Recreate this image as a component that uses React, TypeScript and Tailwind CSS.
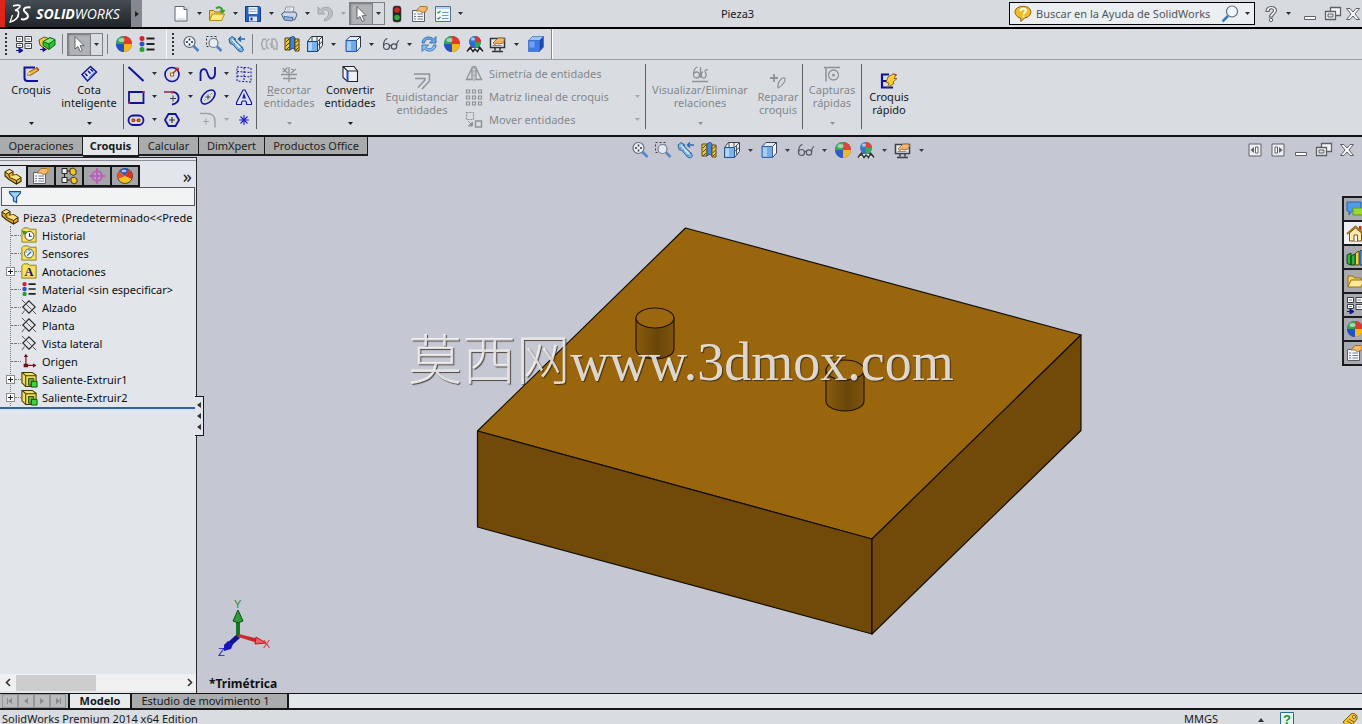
import React, { type ReactNode } from "react";

const NAVY = "#12129a";
const GREY = "#8f9397";

type IconProps = { size?: number };

function Svg({ children, size = 18 }: { children: ReactNode; size?: number }) {
  return (
    <svg width={size} height={size} viewBox="0 0 18 18" fill="none" aria-hidden="true" className="shrink-0">
      {children}
    </svg>
  );
}

/* ---------- file and view icons ---------- */

const NewDoc = () => (
  <Svg>
    <path d="M3 1.5h9l3 3V16H3z" fill="#fbfcfe" stroke="#5c6874" />
    <path d="M12 1.5v3h3" fill="#d5dde5" stroke="#5c6874" />
    <path d="M5 14h8" stroke="#c3ccd6" />
  </Svg>
);
const OpenDoc = () => (
  <Svg>
    <path d="M1.5 15.5v-10h4l1.5 1.5h6v3" fill="#f5d25c" stroke="#9a7411" />
    <path d="M1.5 15.5l3-6.5h12l-3 6.5z" fill="#ffe98c" stroke="#b78a17" />
    <path d="M8 3.5c2-2 5-2 6.500 1.500" stroke="#35a02c" strokeWidth="2" />
    <path d="M11.500 5h6l-3 4z" fill="#35a02c" />
  </Svg>
);
const Save = () => (
  <Svg>
    <path d="M1.500 1.500h14l1 1v14h-15z" fill="#2563c4" stroke="#153a86" />
    <path d="M4.500 2h9v7h-9z" fill="#f1f5fb" />
    <path d="M5.500 4h7M5.500 6.500h7" stroke="#93a8c6" />
    <path d="M5 11.500h8v5H5z" fill="#dce6f4" />
    <path d="M6.500 12.500h2v3h-2z" fill="#153a86" />
  </Svg>
);
const Printer = () => (
  <Svg>
    <path d="M4 8l2-6h8l-1.500 6z" fill="#fff" stroke="#8793a1" />
    <path d="M1.500 9l3-2h11l1.500 3-2.500 5-11-1.500z" fill="#cbd7e6" stroke="#4e5c6c" />
    <path d="M4 11.500l9 1-1 3.500-8-1z" fill="#8fb4e2" stroke="#4e6c94" />
    <path d="M6.500 4h5M6 6h5" stroke="#9fb0c4" />
  </Svg>
);
const Undo = () => (
  <Svg>
    <path d="M2 2v7h7L6.500 6.500C9 3.500 13 5 12.500 9c-.3 2.500-2 4-4 5v2c5-1 8-4 8-8C16.500 2 9 .5 4.500 4.500z" fill="#bcbfc3" stroke="#999da2" strokeWidth=".8" />
  </Svg>
);
const Cursor = () => (
  <Svg>
    <path d="M5 1.500v12.500l3-2.500 2.200 5 2.200-1-2.300-4.800h4z" fill="#fff" stroke="#55585c" strokeWidth=".9" />
  </Svg>
);
const Traffic = () => (
  <Svg>
    <rect x="5" y="1" width="8" height="16" rx="2.500" fill="#202322" stroke="#4a4a4a" strokeWidth=".6" />
    <circle cx="9" cy="5" r="2.800" fill="#d02a22" />
    <circle cx="9" cy="12.500" r="2.800" fill="#2fae3a" />
  </Svg>
);
const Props = ({ size }: IconProps) => (
  <Svg size={size}>
    <path d="M1.500 5.500h12v11h-12z" fill="#f4f6f8" stroke="#5b6067" />
    <path d="M3 9h2M3 11.500h2M3 14h2M6.500 9h5.500M6.500 11.500h5.500M6.500 14h5.500" stroke="#6d7d95" />
    <path d="M5 6l4-4.500h6l1.500 1.500-1.500 3.500-4 1-2-1.500z" fill="#f0bc72" stroke="#94601c" strokeWidth=".8" />
    <path d="M14.500 1l2.500.500v3l-2 1z" fill="#e4902b" />
  </Svg>
);
const ListOpt = () => (
  <Svg>
    <path d="M1.500 1.500h15v15h-15z" fill="#f3f8fb" stroke="#56718c" />
    <path d="M2 2h14v2H2z" fill="#b6d6ee" />
    <path d="M3.500 7l1 1 2-2M3.500 13l1 1 2-2" stroke="#2c9b3e" strokeWidth="1.200" />
    <path d="M8 7.500h6.500M8 10.500h6.500M8 13.500h6.500" stroke="#6a9cc9" />
  </Svg>
);
const Feature = () => (
  <Svg>
    <path d="M1.500 1.500h6v5h-6zM1.500 8.500h6v4h-6zM10 1.500h6.500v5H10zM10 8.500h6.500v5H10z" fill="#fff" stroke="#3a3d42" />
    <path d="M3 4h3M11.500 4H15M11.500 11H15M3 10.500h3" stroke="#777" />
    <path d="M1 15.500h4M4 13l4 2.500L4 18z" stroke={NAVY} fill={NAVY} />
  </Svg>
);
const Block = () => (
  <Svg>
    <path d="M1 5l5-3 6 2v7l-4 4-6-5z" fill="#f2cf45" stroke="#6b5410" />
    <path d="M5 6.500l7-4 5 2v5.500l-6 4.500-6-4z" fill="#2fc135" stroke="#15651a" />
    <path d="M5 6.500l6 2.500 6-4.500M11 9v5.500" stroke="#15651a" />
    <path d="M6 6.500l6-3 4 1.200-5 3.300z" fill="#83ea7b" />
    <path d="M2 14.500h4M5 12.500l3 2-3 2z" stroke={NAVY} fill={NAVY} />
  </Svg>
);
const Ball = ({ size }: IconProps) => (
  <Svg size={size}>
    <circle cx="9" cy="9" r="8" fill="#3566cf" />
    <path d="M9 9L1 9A8 8 0 0 0 9 17z" fill="#2550c4" />
    <path d="M9 9h8A8 8 0 0 1 9 17z" fill="#f0b81c" />
    <path d="M9 9V1A8 8 0 0 1 17 9z" fill="#e23a2a" />
    <path d="M9 9L1 9A8 8 0 0 1 9 1z" fill="#2fa650" />
    <ellipse cx="6.500" cy="5" rx="3" ry="2" fill="#fff" fillOpacity=".55" />
  </Svg>
);
const Material = ({ size }: IconProps) => (
  <Svg size={size}>
    <circle cx="4" cy="3.500" r="2.500" fill="#d3242c" />
    <circle cx="4" cy="9" r="2.500" fill="#2d54c6" />
    <circle cx="4" cy="14.500" r="2.500" fill="#24a12f" />
    <path d="M8.500 3.500h8M8.500 9h8M8.500 14.500h8" stroke="#222" strokeWidth="1.800" />
  </Svg>
);
const ZoomFit = () => (
  <Svg>
    <circle cx="7.500" cy="7" r="5.500" fill="#eef4fa" stroke="#59636f" strokeWidth="1.200" />
    <path d="M7.500 3.500v2M7.500 8.500v2M4 7h2M9 7h2" stroke="#222" strokeWidth="1.500" />
    <path d="M11.500 11l5 5" stroke="#4d7fc4" strokeWidth="2.500" />
  </Svg>
);
const ZoomArea = () => (
  <Svg>
    <path d="M1.500 1.500h10v10h-10z" stroke="#333" strokeDasharray="2 2" />
    <circle cx="8.500" cy="8" r="4.500" fill="#e6eef6" stroke="#6d7782" strokeWidth="1.200" />
    <path d="M12 11.500l4.500 4.500" stroke="#4d7fc4" strokeWidth="2.500" />
  </Svg>
);
const PrevView = () => (
  <Svg>
    <path d="M1 4l3-2.500 3 2 1 3 6 5.500 1.500 3-2 2-3-1-5.500-6.500-3-1z" fill="#7fb8e6" stroke="#1d5a96" />
    <path d="M3.500 7l4-3.500M6 9.500L9 6.500M10.500 15l3.500-3.500" stroke="#1d5a96" />
    <path d="M4 4.500l8.500 9" stroke="#e2f2ff" strokeWidth="1.500" />
    <path d="M10.500 4H17M13 1.500L10.500 4 13 6.500" stroke="#1a62b8" strokeWidth="1.500" />
  </Svg>
);
const Ghost = () => (
  <Svg>
    <path d="M6 4L3 4.500 1.500 9 3 14h3M9.500 4L6.500 6v6L9 14M9.500 9h2v4M12 4h3l2 4v6h-3l-2-4z" stroke="#a5a9ad" strokeWidth="1.500" />
    <path d="M5 8h2M12 9l3 3" stroke="#bfc2c5" strokeWidth="1.500" />
  </Svg>
);
const Section = () => (
  <Svg>
    <path d="M2 3h5v12H2z" fill="#f0c82c" stroke="#4c3c08" />
    <path d="M7 3c3-2 4-2 5 0v12c-1-2-3-2-5 0z" fill="#3e82d6" stroke="#17427c" />
    <path d="M12 4h4v12h-4z" fill="#f0c82c" stroke="#4c3c08" />
    <path d="M3 7l3-3M3 11l3-3M3 15l3-3M12.500 8l3-3M12.500 12l3-3M12.500 15.500l3-3" stroke="#4c3c08" />
  </Svg>
);
const Orient = () => (
  <Svg>
    <path d="M1.500 6.500l4-5h11v9l-5 6h-10z" fill="#e9f1f8" stroke="#333" />
    <path d="M11.500 6.500l5-5M6 1.500v5M11 1.500v5M13.500 4.500v9M11.500 10.500l5-4" stroke="#333" strokeWidth=".9" />
    <path d="M1.500 6.500h10v10h-10z" fill="#76b2ee" stroke="#1a4980" />
    <path d="M2.500 7.500h3.500v8H2.500z" fill="#b4d7f8" />
  </Svg>
);
const Cube = () => (
  <Svg>
    <path d="M2 5.500l4-4h10.500l-4 4z" fill="#e2effb" stroke="#2d3748" />
    <path d="M12.500 5.500l4-4V12l-4 4.500z" fill="#fff" stroke="#2d3748" />
    <path d="M2 5.500h10.500v11H2z" fill="#6fa9e9" stroke="#2b58a0" />
    <path d="M3 6.500h4v9H3z" fill="#a5cdf6" />
  </Svg>
);
const SolidCube = () => (
  <Svg>
    <path d="M1.500 5.500l4-4h11l-4 4z" fill="#9cc3fa" stroke="#3a67c0" strokeWidth=".7" />
    <path d="M12.500 5.500l4-4V12l-4 4.500z" fill="#1f48ae" stroke="#3a67c0" strokeWidth=".7" />
    <path d="M1.500 5.500h11v11h-11z" fill="#3f7be8" stroke="#3a67c0" strokeWidth=".7" />
    <path d="M2.500 6.500h5v6h-5z" fill="#6ea2f5" />
  </Svg>
);
const Glasses = () => (
  <Svg>
    <circle cx="4.500" cy="11.500" r="3" stroke="#4a5058" strokeWidth="1.200" />
    <circle cx="12" cy="11.500" r="2.700" stroke="#4a5058" strokeWidth="1.200" />
    <path d="M7.500 11c.5-1 1.500-1 2 0M1.500 11c0-4 1-7 4-7.500M14.700 11c0-3 .5-5 2.500-5.500" stroke="#4a5058" strokeWidth="1.200" />
  </Svg>
);
const Rebuild = () => (
  <Svg>
    <path d="M2 8c0-6 8-8 11.500-4L16 1.500V8H9.500L12 5.500C9 3 5 4.500 4.500 8z" fill="#6ba6e4" stroke="#2464ad" strokeWidth=".8" />
    <path d="M16 10c0 6-8 8-11.500 4L2 16.500V10h6.500L6 12.500c3 2.500 7 1 7.500-2.500z" fill="#8fbfee" stroke="#2464ad" strokeWidth=".8" />
  </Svg>
);
const Scene = () => (
  <Svg>
    <path d="M1 16.500l3.500-4.500h9l3.500 4.500" fill="#eee" stroke="#222" strokeWidth="1.300" />
    <path d="M2 15l2.500-2 2.500 3.500L9 14l2.500 2.500 2-3.500 2.500 2" stroke="#222" strokeWidth="1.500" />
    <circle cx="9" cy="7" r="6" fill="#3566cf" />
    <path d="M9 7V1A6 6 0 0 0 3 7z" fill="#2f7fd0" />
    <path d="M9 7V1a6 6 0 0 1 6 6z" fill="#e0362a" />
    <path d="M9 7h6a6 6 0 0 1-6 6z" fill="#2fa650" />
    <ellipse cx="7" cy="4" rx="2" ry="1.500" fill="#fff" fillOpacity=".6" />
  </Svg>
);
const Screen = () => (
  <Svg>
    <path d="M1.500 3.500h14v9h-14z" fill="#eef1f4" stroke="#2f3338" strokeWidth="1.500" />
    <path d="M6 13v2.500M11 13v2.500M3 16.500h11" stroke="#2f3338" strokeWidth="1.500" />
    <path d="M4 8l5-5h5l2 1-2 4-4 1-2-1-2 1.500z" fill="#f0b56a" stroke="#8a5718" strokeWidth=".8" />
    <path d="M3.500 10.500h9" stroke="#888" />
  </Svg>
);

/* ---------- sketch icons ---------- */

const Sketch = () => (
  <Svg>
    <path d="M13 2.500H2.500v10.500c0 2.500 1 3 3 3H16" stroke={NAVY} strokeWidth="2" />
    <path d="M5 10l2-3 8-4.500 2 2.500-8 5z" fill="#f4b53a" stroke="#7a4f10" strokeWidth=".9" />
    <path d="M5 10l2-3 1.500 2z" fill="#fff0c8" />
    <path d="M14 3l1.200-.7L17 5l-1.200.6z" fill="#b83a2a" />
  </Svg>
);
const Dimension = () => (
  <Svg>
    <path d="M2 9.500l8.500-8 6 5.500-9 9z" fill="#dce4fa" stroke={NAVY} strokeWidth="1.500" />
    <path d="M5 8.500L7.500 11M8 6l2.500 2.500M10.500 4L13 6.500" stroke={NAVY} strokeWidth="1.500" />
    <path d="M8.500 13l6-6" stroke="#4a6fd6" />
  </Svg>
);
const Line = () => (
  <Svg>
    <path d="M1.500 2l15 14" stroke={NAVY} strokeWidth="2" />
  </Svg>
);
const CircleI = () => (
  <Svg>
    <circle cx="9" cy="9.500" r="7" stroke={NAVY} strokeWidth="1.600" />
    <path d="M9 9.500l5-5.500" stroke="#b42020" strokeWidth="1.200" />
    <path d="M7.500 8h3v3h-3z" fill="#fff" stroke="#a05a18" />
    <path d="M13 3h2.500v2.500" stroke="#c22" />
  </Svg>
);
const Spline = () => (
  <Svg>
    <path d="M1.500 16V8C2 3 7 3 8 7l1.500 4c2 4 6 3 6.500-2V2" stroke={NAVY} strokeWidth="1.800" />
  </Svg>
);
const Region = () => (
  <Svg>
    <path d="M2 2l14 1v14L2 16zM2 6.500l14 1M2 11l14 1M9 2.500v14" stroke={NAVY} strokeDasharray="2 1.500" />
  </Svg>
);
const RectI = () => (
  <Svg>
    <path d="M2 4h14.500v11H2z" stroke={NAVY} strokeWidth="1.800" />
    <path d="M1 14h2v2H1zM15.500 3h2v2h-2z" fill="#c92a2a" />
  </Svg>
);
const ArcI = () => (
  <Svg>
    <path d="M1 4h8" stroke="#7a1e3e" strokeWidth="1.400" />
    <path d="M8 4c10-1 10 12 1 12.500" stroke={NAVY} strokeWidth="1.800" />
    <path d="M10 7.500v6M7 10.500h6" stroke="#444" />
    <path d="M8 3h2.500v2.500H8z" fill="#c92a2a" />
  </Svg>
);
const EllipseI = () => (
  <Svg>
    <ellipse cx="9" cy="9" rx="8.500" ry="5" transform="rotate(-45 9 9)" stroke={NAVY} strokeWidth="1.600" />
    <path d="M9 6.500v5M6.500 9h5M5.500 12.500l1-1M11.500 6.500l1-1" stroke="#444" />
  </Svg>
);
const TextI = () => (
  <Svg>
    <path d="M1.500 16.500v-2L8 2h2l6.500 12.500v2h-5v-2l-1-1.500h-3l-1 1.500v2zM8 10h2.200L9 6.500z" fill="#dbe1fa" stroke={NAVY} strokeWidth="1.100" />
  </Svg>
);
const Slot = () => (
  <Svg>
    <rect x="1.500" y="4.500" width="15" height="9.500" rx="4.700" stroke={NAVY} strokeWidth="1.800" />
    <path d="M5 8h2.500v2.500H5zM10.500 8H13v2.500h-2.500z" fill="#c97a3b" stroke="#922" strokeWidth=".8" />
    <path d="M7.500 9.200h3" stroke="#922" strokeDasharray="1 1" />
  </Svg>
);
const Hexagon = () => (
  <Svg>
    <path d="M5.500 3h7l3.500 6-3.500 6h-7L2 9z" stroke={NAVY} strokeWidth="1.800" />
    <path d="M9 6v6M6 9h6" stroke="#333" strokeWidth="1.200" />
  </Svg>
);
const Fillet = () => (
  <Svg>
    <path d="M1 2.500h7c6 0 8 3 8 8v6" stroke="#a0a4a8" strokeWidth="1.500" />
    <path d="M7 7.500v6M4 10.500h6" stroke="#a0a4a8" />
  </Svg>
);
const PointI = () => (
  <Svg>
    <path d="M9 4v10M4 9h10M5.500 5.500l7 7M12.500 5.500l-7 7" stroke="#2222c8" strokeWidth="1.100" />
  </Svg>
);
const Trim = () => (
  <Svg>
    <path d="M1 9.500h16M9 2v15M3 13.500h13" stroke={GREY} strokeWidth="1.300" />
    <path d="M2.500 3l5 5M7.500 2.500L3 7M11 8l5-4M11 4l4 1.500" stroke={GREY} strokeWidth="1.300" />
  </Svg>
);
const Convert = () => (
  <Svg>
    <path d="M2 1.500h11l3.500 4.500v10.500h-10L2 12.500z" fill="#eef0f3" stroke="#222" strokeWidth="1.100" />
    <path d="M2 1.500L6.500 6h10" stroke="#222" strokeWidth="1.100" />
    <path d="M6.500 6v10.500" stroke="#2343d8" strokeWidth="2" />
  </Svg>
);
const Offset = () => (
  <Svg>
    <path d="M1 2h15.500v7L9 17M2 6.500h10v1.500L5 15.500" stroke={GREY} strokeWidth="1.500" />
  </Svg>
);
const Mirror = () => (
  <Svg>
    <path d="M1.500 14.500L7 3v11.500zM16.500 14.500L11 3v11.500z" stroke={GREY} strokeWidth="1.300" />
    <path d="M9 1v16" stroke={GREY} strokeDasharray="3 1" />
    <path d="M6.500 2h5" stroke={GREY} strokeWidth="1.500" />
  </Svg>
);
const Pattern = () => (
  <Svg>
    <path d="M1.500 2h3v3h-3zM7.500 2h3v3h-3zM13.500 2h3v3h-3zM1.500 8h3v3h-3zM7.500 8h3v3h-3zM13.500 8h3v3h-3zM1.500 14h3v3h-3zM7.500 14h3v3h-3zM13.500 14h3v3h-3z" stroke={GREY} strokeWidth="1.200" />
  </Svg>
);
const Move = () => (
  <Svg>
    <path d="M1.500 1.500h7v7h-7z" stroke={GREY} strokeDasharray="2 1" strokeWidth="1.200" />
    <path d="M10.500 10h6v6h-6z" stroke={GREY} strokeWidth="1.400" />
    <path d="M3 10l4 4M7.500 11v4h-4z" stroke={GREY} fill={GREY} />
  </Svg>
);
const Relations = () => (
  <Svg>
    <circle cx="5.500" cy="10" r="3" stroke={GREY} strokeWidth="1.300" />
    <path d="M2.500 9c0-4 1-6 4-7M9.500 2v11M12 7c-2 0-2.500 5 0 6s4-3 2.500-5.500S15 5 17 4.500M1 16.500h16" stroke={GREY} strokeWidth="1.300" />
  </Svg>
);
const Repair = () => (
  <Svg>
    <path d="M5 2v8M1 6h8" stroke={GREY} strokeWidth="1.800" />
    <path d="M9 16c-1-6 4-11 6.500-10 2 2-2 8-6.500 10z" stroke={GREY} strokeWidth="1.200" />
  </Svg>
);
const Snaps = () => (
  <Svg>
    <path d="M1 2.500h16M3 2v14.500" stroke={GREY} strokeWidth="1.500" />
    <circle cx="10.500" cy="10" r="5" stroke={GREY} strokeWidth="1.300" />
    <circle cx="10.500" cy="10" r="1.500" fill={GREY} />
  </Svg>
);
const Rapid = () => (
  <Svg>
    <path d="M9 2.500H2v13h11M2 9h5" stroke={NAVY} strokeWidth="2.200" />
    <path d="M8 5l5-3 3 1-2 3.500h3L13 10l1 1.500-6.500 4L9 11l-3-.5z" fill="#f8cf2e" stroke="#775508" strokeWidth=".8" />
    <path d="M13 1l4 1.500-1 2z" fill="#c03a28" />
  </Svg>
);

/* ---------- tree icons ---------- */

const PartIcon = () => (
  <Svg>
    <path d="M1 4l4.500-2.500L9 3.500v4l3.500-1 4.500 3v4L12.500 16 5 11.500 1 8z" fill="#e3ad2c" stroke="#3b2c08" strokeWidth="1.100" />
    <path d="M1.500 4L5.500 2l3 1.500L4.500 6z" fill="#ffe88a" />
    <path d="M5.500 9.500L9 7.500l3.500-.5 3.800 2.500-4 2.500z" fill="#ffe07a" />
    <path d="M1 4l3.700 2.200L9 3.500M4.700 6.200l.8 3.300 7 3 4.500-3M12.500 12.500V16" stroke="#3b2c08" />
  </Svg>
);
const Folder = ({ children }: { children: ReactNode }) => (
  <Svg size={16}>
    <path d="M1 3l2-2h5l1.500 1.500H17V17H1z" fill="#f9e156" stroke="#83751a" />
    {children}
  </Svg>
);
const History = () => (
  <Folder>
    <circle cx="9.500" cy="10" r="5" fill="#fff" stroke="#334" />
    <path d="M9.500 7v3.500H12" stroke="#223" strokeWidth="1.200" />
    <path d="M1 4l6 1-4 4z" fill="#239b33" />
  </Folder>
);
const Sensors = () => (
  <Folder>
    <circle cx="9" cy="9.500" r="5" fill="#f3f9ff" stroke="#345" />
    <path d="M7 12l4.500-4.500M6 8h1M9 6v1" stroke="#234fa5" strokeWidth="1.400" />
  </Folder>
);
const Notes = () => (
  <Folder>
    <text x="9" y="14.500" textAnchor="middle" fontFamily="Liberation Serif, serif" fontWeight="700" fontSize="14" fill="#14147a">A</text>
  </Folder>
);
const Plane = () => (
  <Svg size={16}>
    <path d="M9 2l7 7-7 7-7-7z" stroke="#222" strokeWidth="1.200" />
    <path d="M1 1l4 4M13 13l4 4M1 17l3-4M6 6l6 6" stroke="#444" />
  </Svg>
);
const Origin = () => (
  <Svg size={16}>
    <path d="M5.500 2v12H17" stroke="#8c1620" strokeWidth="1.400" />
    <path d="M3 4.500L5.500 1 8 4.500zM13.500 11.500L17 14l-3.500 2.500zM3 12h5v4H3z" fill="#6f101b" />
  </Svg>
);
const Extrude = () => (
  <Svg size={17}>
    <path d="M1 1.500h11l4 3v12H5l-4-4z" fill="#f3de5e" stroke="#3f380c" strokeWidth="1.100" />
    <path d="M5 5h11M5 5v11.500M1 1.500L5 5" stroke="#3f380c" strokeWidth="1.100" />
    <path d="M8 8h5.500v3H11v4H8z" fill="#7cae30" stroke="#1c4e12" />
    <path d="M11 11h6v6h-6z" fill="#38d53b" stroke="#145017" />
  </Svg>
);
const ConfigIcon = () => (
  <Svg>
    <path d="M2 1.500h5v5H2zM2 10.500h5v5H2z" fill="#eee" stroke="#222" />
    <path d="M7 4h3M4.500 6.500v4M7 13h3" stroke="#222" />
    <path d="M10 2l3-1 3 2v4l-3 1.500-3-2zM11 11l3-1 3 2v3.500l-3 1.500-3-2z" fill="#eec733" stroke="#4a3808" />
  </Svg>
);
const TargetIcon = () => (
  <Svg>
    <circle cx="9" cy="9" r="5" stroke="#c254c4" strokeWidth="1.600" />
    <path d="M9 1v16M1 9h16" stroke="#c254c4" strokeWidth="1.600" />
  </Svg>
);
const DisplayBall = () => (
  <Svg>
    <circle cx="9" cy="9" r="7.500" fill="#f0c324" stroke="#2c2a28" strokeWidth=".8" />
    <path d="M9 9L3 4A7.500 7.500 0 0 1 13 2.700z" fill="#2858c8" />
    <path d="M9 9l4-6.300A7.500 7.500 0 0 1 16 12z" fill="#dc3122" />
    <path d="M9 9L3 4a7.500 7.500 0 0 0-1 8z" fill="#e0562a" />
    <ellipse cx="8" cy="4" rx="2.500" ry="1.300" fill="#fff" fillOpacity=".65" />
  </Svg>
);
const Funnel = () => (
  <Svg size={14}>
    <path d="M2 2h14v2l-5 5.500v6.500l-4-2V9.500L2 4z" fill="#9fd0ef" stroke="#1b4f94" strokeWidth="1.500" />
  </Svg>
);

/* ---------- window icons ---------- */

const frame = "#5e6268";
const MinI = () => (
  <Svg>
    <path d="M3.500 11.500h11v3h-11z" fill="#fff" stroke={frame} />
  </Svg>
);
const RestoreI = () => (
  <Svg>
    <path d="M6.500 2.500h10v8h-10z" fill="#f5f6f8" stroke={frame} strokeWidth="1.300" />
    <path d="M1.500 6.500h10v8h-10z" fill="#f5f6f8" stroke={frame} strokeWidth="1.300" />
    <path d="M4 9h5v3H4z" fill="#dfe2e6" stroke={frame} />
  </Svg>
);
const CloseI = () => (
  <Svg>
    <path d="M2.500 3.500h3.500L9 7l3-3.500h3.500L11 9l4.500 5.500H12L9 11l-3 3.500H2.500L7 9z" fill="#f5f6f8" stroke={frame} />
  </Svg>
);
const PaneL = () => (
  <Svg>
    <path d="M3 3h12v12H3z" fill="#eceef3" stroke={frame} />
    <path d="M9.500 6h2.500v6H9.500z" fill="#fff" stroke={frame} />
    <path d="M8 6v6L4.500 9z" fill={frame} />
  </Svg>
);
const PaneR = () => (
  <Svg>
    <path d="M3 3h12v12H3z" fill="#eceef3" stroke={frame} />
    <path d="M6 6h2.500v6H6z" fill="#fff" stroke={frame} />
    <path d="M10 6v6l3.500-3z" fill={frame} />
  </Svg>
);
const HelpI = () => (
  <Svg>
    <path d="M4 6.500C4 0 14.500 0 14.500 5.500c0 3-3.500 3.500-4 6.500H7.500c0-4 4-4 4-6.500C11.500 3 7 3 7 6.500z" fill="#f4f5f7" stroke={frame} strokeWidth="1.100" />
    <circle cx="9" cy="15" r="1.700" fill="#f4f5f7" stroke={frame} />
  </Svg>
);
const HelpBubble = () => (
  <Svg>
    <path d="M2 4c3-3.500 12-4 14.500 1 1.500 4-2 7.500-6 8L7 16.500 6.500 13C2 12.500-.5 7 2 4z" fill="#f1bc28" stroke="#8a5f0c" />
    <path d="M6.500 6c0-3 5.500-3 5.500-.5 0 2-2.500 1.800-2.500 4" stroke="#fff" strokeWidth="1.800" />
    <circle cx="9.500" cy="11.500" r="1" fill="#fff" />
  </Svg>
);
const Magnifier = () => (
  <Svg>
    <circle cx="11" cy="6.500" r="5.500" fill="#f2f9fe" stroke="#5d6c7c" strokeWidth="1.200" />
    <path d="M7 11l-5.500 5.500" stroke="#3f78bd" strokeWidth="2.500" />
  </Svg>
);

/* ---------- task pane icons ---------- */

const Forum = () => (
  <Svg>
    <path d="M1 2h14v9H6l-3 4v-4H1z" fill="#4f9be6" stroke="#2764a8" />
    <path d="M7 8h11v7H7z" fill="#9bd834" stroke="#5c9a18" />
  </Svg>
);
const Home = () => (
  <Svg>
    <path d="M13 2h2.500v5L13 5z" fill="#b3391f" />
    <path d="M3.500 9v8h12V9L9.500 4z" fill="#fbeab0" stroke="#75501a" />
    <path d="M1 10l8.500-7.500L18 10" stroke="#a8701b" strokeWidth="2" />
    <path d="M8 17v-6h3.500v6" fill="#fff" stroke="#75501a" />
  </Svg>
);
const Library = () => (
  <Svg>
    <path d="M1 7l4-2v12l-4-1.500zM5 8l4-2v11H5z" fill="#33b23f" stroke="#0e4d16" />
    <path d="M9.500 5L13 3v14H9.500z" fill="#f0d04a" stroke="#5a4a0a" />
    <path d="M14 3l3-1v15h-3z" fill="#5f93df" stroke="#1c3f7d" />
  </Svg>
);
const FolderOpen = () => (
  <Svg>
    <path d="M2 15V4h5l1.500 2H15v3" fill="#f6cf5c" stroke="#93701a" />
    <path d="M2 15l3-7h13l-3 7z" fill="#ffe999" stroke="#93701a" />
  </Svg>
);

/* ---------- shared controls ---------- */

function Caret({ dim, className = "w-3" }: { dim?: boolean; className?: string }) {
  return (
    <button type="button" aria-label="Más opciones" className={`flex shrink-0 items-center justify-center ${className}`}>
      <svg width="5" height="3" viewBox="0 0 5 3" aria-hidden="true">
        <path d="M0 0h5L2.500 3z" fill={dim ? "#a4a8ac" : "#2c2f33"} />
      </svg>
    </button>
  );
}

function Tool({ label, children, className = "w-[23px]" }: { label: string; children: ReactNode; className?: string }) {
  return (
    <button type="button" aria-label={label} className={`flex shrink-0 items-center justify-center ${className}`}>
      {children}
    </button>
  );
}

function SelectTool() {
  return (
    <div className="flex h-[23px] border border-[#7d8186]">
      <Tool label="Seleccionar" className="w-[22px] bg-[#b0b3b6] shadow-[inset_1px_1px_2px_#777]">
        <Cursor />
      </Tool>
      <Caret className="w-3 border-l border-[#7d8186]" />
    </div>
  );
}

const Grip = () => <div className="mx-[5px] h-[22px] border-l-2 border-dotted border-[#33363a]" />;
const Sep = () => <div className="mx-1 h-5 w-px bg-[#7b7f84]" />;

function TitleBar() {
  return (
    <header className="flex h-[29px] shrink-0 items-center border-b-2 border-black bg-[#d7dbdf]">
      <div className="flex h-full w-[131px] shrink-0 items-center border-l-[5px] border-[#e2231a] bg-linear-to-b from-[#454c52] to-[#1f252a] text-white">
        <svg width="25" height="24" viewBox="0 0 25 24" fill="none" aria-hidden="true" className="ml-1 shrink-0">
          <path d="M4 4c3-1 7.500-1.500 7 .5-.5 1.500-3 3-5 4 3-.5 4 1 3.500 3.500C9 16 5 19 1 20" stroke="#fff" strokeWidth="1.600" />
          <path d="M3.500 13L1 20c5-1 9-5 8.500-8" stroke="#fff" strokeWidth="1.200" />
          <path d="M21.500 5.500c-4-1-7 .5-6.500 3 .5 2 4.500 3 4 6-.5 2.500-4 3.500-7 2.500" stroke="#fff" strokeWidth="2" />
        </svg>
        <span className="ml-[2px] font-['Open_Sans',sans-serif] text-[14px] leading-none italic">
          <b>SOLID</b>WORKS
        </span>
      </div>
      <button type="button" aria-label="Mostrar menú" className="mr-[27px] flex h-full w-[11px] shrink-0 items-center justify-center bg-[#85898d]">
        <svg width="4" height="6" viewBox="0 0 4 6" aria-hidden="true">
          <path d="M0 0l4 3-4 3z" fill="#222" />
        </svg>
      </button>
      <Tool label="Nuevo" className="w-6"><NewDoc /></Tool>
      <Caret />
      <Tool label="Abrir" className="w-6"><OpenDoc /></Tool>
      <Caret />
      <Tool label="Guardar" className="w-6"><Save /></Tool>
      <Caret />
      <Tool label="Imprimir" className="w-6"><Printer /></Tool>
      <Caret />
      <Tool label="Deshacer" className="w-6"><Undo /></Tool>
      <Caret dim />
      <SelectTool />
      <Tool label="Reconstruir"><Traffic /></Tool>
      <Tool label="Propiedades de archivo"><Props /></Tool>
      <Tool label="Opciones"><ListOpt /></Tool>
      <Caret />
      <h1 className="flex-1 text-center">Pieza3</h1>
      <form className="flex h-[23px] w-[246px] shrink-0 items-center border border-black bg-[#eceff1] pl-1">
        <HelpBubble />
        <input
          type="text"
          aria-label="Buscar en la Ayuda"
          placeholder="Buscar en la Ayuda de SolidWorks"
          className="ml-1 min-w-0 flex-1 bg-transparent outline-none placeholder:text-[#50555a]"
        />
        <Tool label="Buscar"><Magnifier /></Tool>
        <Caret className="mr-px w-3" />
      </form>
      <Tool label="Ayuda" className="ml-1 w-[23px]"><HelpI /></Tool>
      <Caret />
      <Tool label="Minimizar" className="ml-1 w-[23px]"><MinI /></Tool>
      <Tool label="Restaurar"><RestoreI /></Tool>
      <Tool label="Cerrar" className="w-[18px]"><CloseI /></Tool>
    </header>
  );
}

function ViewTools() {
  return (
    <>
      <Tool label="Zoom para ajustar"><ZoomFit /></Tool>
      <Tool label="Zoom encuadre"><ZoomArea /></Tool>
      <Tool label="Vista previa"><PrevView /></Tool>
    </>
  );
}

function StandardBar() {
  return (
    <div className="flex h-[31px] shrink-0 items-center border-b border-[#9a9ea2] bg-[#d9dde1]">
      <Grip />
      <Tool label="Vistas"><Feature /></Tool>
      <Tool label="Bloque"><Block /></Tool>
      <Sep />
      <SelectTool />
      <Sep />
      <Tool label="Apariencia"><Ball /></Tool>
      <Tool label="Material"><Material /></Tool>
      <div className="ml-2 h-full w-px bg-[#f3f5f6]" />
      <Grip />
      <ViewTools />
      <Sep />
      <Tool label="Ocultar"><Ghost /></Tool>
      <Tool label="Vista de sección"><Section /></Tool>
      <Tool label="Orientación"><Orient /></Tool>
      <Caret className="w-[15px]" />
      <Tool label="Visualización"><Cube /></Tool>
      <Caret className="w-[15px]" />
      <Tool label="Ocultar elementos"><Glasses /></Tool>
      <Caret className="w-[15px]" />
      <Tool label="Redibujar"><Rebuild /></Tool>
      <Tool label="Editar apariencia"><Ball /></Tool>
      <Tool label="Aplicar escena"><Scene /></Tool>
      <Tool label="Configurar vista"><Screen /></Tool>
      <Caret className="w-[15px]" />
      <Tool label="Sombreado"><SolidCube /></Tool>
      <div className="ml-1 h-full w-px bg-[#85898d]" />
      <div className="h-full w-px bg-white" />
    </div>
  );
}

type BigProps = { icon: ReactNode; label: ReactNode; width: string; dim?: boolean; low?: boolean; caret?: boolean };

function Big({ icon, label, width, dim, low, caret }: BigProps) {
  return (
    <button
      type="button"
      className={`flex shrink-0 flex-col items-center pb-1 text-center leading-[13px] ${width} ${low ? "pt-3" : "pt-[5px]"} ${dim ? "text-[#84888c]" : "text-[#16181a]"}`}
    >
      {icon}
      <span className="whitespace-nowrap">{label}</span>
      {caret && (
        <svg width="5" height="3" viewBox="0 0 5 3" aria-hidden="true" className="mt-auto mb-[2px]">
          <path d="M0 0h5L2.500 3z" fill={dim ? "#8f9397" : "#1c1e20"} />
        </svg>
      )}
    </button>
  );
}

const Rule = () => <div className="mt-1 mb-[2px] w-px shrink-0 bg-[#5d6166]" />;

function SmallRow({ icon, label, caret }: { icon: ReactNode; label: string; caret?: boolean }) {
  return (
    <div className="flex h-[23px] items-center text-[#84888c]">
      <button type="button" className="flex flex-1 items-center">
        <span className="flex w-6">{icon}</span>
        {label}
      </button>
      {caret && <Caret dim className="w-[15px]" />}
    </div>
  );
}

function Ribbon() {
  return (
    <div className="flex h-[77px] shrink-0 items-stretch border-b-2 border-[#101112] bg-[#d9dde1] pb-1">
      <Big icon={<Sketch />} label="Croquis" width="ml-[3px] w-14" caret />
      <Big icon={<Dimension />} label={<>Cota<br />inteligente</>} width="w-[60px]" caret />
      <div className="ml-1 flex">
        <Rule />
      </div>
      <div className="grid grid-cols-[24px_12px_24px_12px_24px_12px_24px] content-start pt-[2px] auto-rows-[23px]">
        <Tool label="Línea" className=""><Line /></Tool>
        <Caret />
        <Tool label="Círculo" className=""><CircleI /></Tool>
        <Caret />
        <Tool label="Spline" className=""><Spline /></Tool>
        <Caret />
        <Tool label="Plano" className=""><Region /></Tool>
        <Tool label="Rectángulo" className=""><RectI /></Tool>
        <Caret />
        <Tool label="Arco" className=""><ArcI /></Tool>
        <Caret />
        <Tool label="Elipse" className=""><EllipseI /></Tool>
        <Caret />
        <Tool label="Texto" className=""><TextI /></Tool>
        <Tool label="Ranura" className=""><Slot /></Tool>
        <Caret />
        <Tool label="Polígono" className=""><Hexagon /></Tool>
        <span />
        <Tool label="Redondeo" className=""><Fillet /></Tool>
        <Caret dim />
        <Tool label="Punto" className=""><PointI /></Tool>
      </div>
      <Rule />
      <Big icon={<Trim />} label={<><u>R</u>ecortar<br />entidades</>} width="w-16" dim caret />
      <Big icon={<Convert />} label={<>Convertir<br />entidades</>} width="w-[58px]" caret />
      <Big icon={<Offset />} label={<>Equidistanciar<br />entidades</>} width="w-[86px]" dim low />
      <div className="w-[180px] shrink-0 pt-[2px]">
        <SmallRow icon={<Mirror />} label="Simetría de entidades" />
        <SmallRow icon={<Pattern />} label="Matriz lineal de croquis" caret />
        <SmallRow icon={<Move />} label="Mover entidades" caret />
      </div>
      <Rule />
      <Big icon={<Relations />} label={<>Visualizar/Eliminar<br />relaciones</>} width="w-[108px]" dim caret />
      <Big icon={<Repair />} label={<>Reparar<br />croquis</>} width="w-12" dim low />
      <Rule />
      <Big icon={<Snaps />} label={<>Capturas<br />rápidas</>} width="w-[58px]" dim caret />
      <Rule />
      <Big icon={<Rapid />} label={<>Croquis<br />rápido</>} width="w-[54px]" low />
    </div>
  );
}

function CommandTabs() {
  const tab = "h-[19px] border-r border-b-2 border-[#1b1c1e] bg-[#a9abad] text-center text-[#222]";
  return (
    <div className="flex h-5 shrink-0 items-start">
      <nav className="flex shrink-0">
        <button type="button" className={`${tab} w-[83px]`}>Operaciones</button>
        <button type="button" className="h-5 w-14 border-r border-b-2 border-[#1b1c1e] bg-[#e4e7ea] pb-[2px] font-bold">Croquis</button>
        <button type="button" className={`${tab} w-[60px]`}>Calcular</button>
        <button type="button" className={`${tab} w-[66px]`}>DimXpert</button>
        <button type="button" className={`${tab} w-[103px]`}>Productos Office</button>
      </nav>
      <div className="flex flex-1 justify-center pt-1 pr-[54px] opacity-90">
        <ViewTools />
        <Tool label="Vista de sección"><Section /></Tool>
        <Tool label="Orientación"><Orient /></Tool>
        <Caret className="w-[14px]" />
        <Tool label="Visualización"><Cube /></Tool>
        <Caret className="w-[14px]" />
        <Tool label="Ocultar elementos"><Glasses /></Tool>
        <Caret className="w-[14px]" />
        <Tool label="Editar apariencia"><Ball /></Tool>
        <Tool label="Aplicar escena"><Scene /></Tool>
        <Caret className="w-[14px]" />
        <Tool label="Configurar vista"><Screen /></Tool>
        <Caret className="w-[14px]" />
      </div>
      <div className="mr-1 flex shrink-0 pt-1">
        <Tool label="Panel izquierdo"><PaneL /></Tool>
        <Tool label="Panel derecho"><PaneR /></Tool>
        <Tool label="Minimizar documento"><MinI /></Tool>
        <Tool label="Restaurar documento"><RestoreI /></Tool>
        <Tool label="Cerrar documento"><CloseI /></Tool>
      </div>
    </div>
  );
}

const nodes: { label: string; icon: ReactNode; expand?: boolean }[] = [
  { label: "Historial", icon: <History /> },
  { label: "Sensores", icon: <Sensors /> },
  { label: "Anotaciones", icon: <Notes />, expand: true },
  { label: "Material <sin especificar>", icon: <Material size={16} /> },
  { label: "Alzado", icon: <Plane /> },
  { label: "Planta", icon: <Plane /> },
  { label: "Vista lateral", icon: <Plane /> },
  { label: "Origen", icon: <Origin /> },
  { label: "Saliente-Extruir1", icon: <Extrude />, expand: true },
  { label: "Saliente-Extruir2", icon: <Extrude />, expand: true },
];

function FeaturePanel() {
  const tab = "flex h-[22px] w-7 items-center justify-center border-t-2 border-r-2 border-b-2 border-[#151617] bg-[#a3a5a8]";
  return (
    <aside className="relative flex w-[197px] shrink-0 flex-col border-t border-r border-[#26282b] bg-[#e2e6ea]">
      <div className="mt-[2px] h-px bg-[#8b8e96]" />
      <div className="mt-1 flex">
        <button type="button" aria-label="Árbol de operaciones" className="flex h-[22px] w-7 items-center justify-center border-t border-r-2 border-[#151617]">
          <PartIcon />
        </button>
        <button type="button" aria-label="Propiedades" className={tab}><Props /></button>
        <button type="button" aria-label="Configuraciones" className={tab}><ConfigIcon /></button>
        <button type="button" aria-label="DimXpert" className={tab}><TargetIcon /></button>
        <button type="button" aria-label="Apariencias" className={tab}><DisplayBall /></button>
        <button type="button" className="ml-auto pr-1 text-[18px] leading-[18px]">»</button>
      </div>
      <label className="mx-px flex h-[19px] items-center border border-[#53565a] bg-[#f1f3f5] pl-[6px]">
        <Funnel />
        <input type="text" aria-label="Filtrar" className="min-w-0 flex-1 bg-transparent outline-none" />
      </label>
      <div className="pt-[2px] pb-px text-[#0c0d0e]">
        <div className="flex h-[18px] items-center gap-1 pl-px whitespace-pre">
          <PartIcon />
          <span>Pieza3  (Predeterminado&lt;&lt;Prede</span>
        </div>
        <ul className="ml-[10px] border-l border-dotted border-[#777]">
          {nodes.map((n) => (
            <li key={n.label} className="flex h-[18px] items-center whitespace-nowrap">
              {n.expand ? (
                <button type="button" aria-label={`Expandir ${n.label}`} className="-ml-[5px] flex h-[9px] w-[9px] items-center justify-center border border-[#8a8d90] bg-white">
                  <svg width="5" height="5" viewBox="0 0 5 5" aria-hidden="true">
                    <path d="M0 2h5v1H0zM2 0h1v5H2z" fill="#222" />
                  </svg>
                </button>
              ) : (
                <span className="w-1 border-t border-dotted border-[#777]" />
              )}
              <span className="w-[6px] border-t border-dotted border-[#777]" />
              <span className="flex w-[21px] shrink-0">{n.icon}</span>
              {n.label}
            </li>
          ))}
        </ul>
      </div>
      <div className="h-1 border-t-2 border-[#3e5f96] bg-[#cfe6fa]" />
      <div className="mt-auto mb-[2px] flex h-[17px] items-center bg-[#f0f0f0]">
        <button type="button" aria-label="Desplazar a la izquierda" className="flex w-4 justify-center">
          <svg width="6" height="9" viewBox="0 0 6 9" fill="none" aria-hidden="true"><path d="M5 1L1.500 4.500 5 8" stroke="#333" strokeWidth="1.600" /></svg>
        </button>
        <div className="h-4 w-20 bg-[#cdcdcd]" />
        <button type="button" aria-label="Desplazar a la derecha" className="ml-auto flex w-3 justify-center">
          <svg width="6" height="9" viewBox="0 0 6 9" fill="none" aria-hidden="true"><path d="M1 1l3.500 3.500L1 8" stroke="#333" strokeWidth="1.600" /></svg>
        </button>
      </div>
      <button type="button" aria-label="Contraer panel" className="absolute top-[238px] -right-2 flex h-10 w-[9px] flex-col items-center justify-evenly border border-l-0 border-[#151617] bg-[#e2e6ea]">
        {[0, 1, 2].map((i) => (
          <svg key={i} width="4" height="6" viewBox="0 0 4 6" aria-hidden="true"><path d="M4 0v6L0 3z" fill="#333" /></svg>
        ))}
      </button>
    </aside>
  );
}

function Boss({ cx, top }: { cx: number; top: number }) {
  return (
    <g stroke="#1a1204" strokeWidth="1.100">
      <path d={`M${cx - 19} ${top}v31a19 10 0 0 0 38 0v-31z`} fill="url(#boss)" />
      <ellipse cx={cx} cy={top} rx="19" ry="10" fill="#9a670f" />
    </g>
  );
}

function Viewport() {
  return (
    <section className="relative min-w-0 flex-1">
      <svg viewBox="197 157 1165 536" className="absolute inset-0 h-full w-full" aria-label="Modelo">
        <defs>
          <linearGradient id="boss">
            <stop offset="0" stopColor="#8a5b0d" />
            <stop offset=".55" stopColor="#694609" />
            <stop offset="1" stopColor="#7f540d" />
          </linearGradient>
        </defs>
        <g stroke="#140e04" strokeWidth="1.200" strokeLinejoin="round">
          <path d="M685.500 228L1081 335 872 539 477.500 431z" fill="#99660d" />
          <path d="M477.500 431L872 539v95L477.500 527z" fill="#714a0a" />
          <path d="M872 539l209-204v95.500L872 634z" fill="#714a0a" />
        </g>
        <Boss cx={655} top={318} />
        <Boss cx={845} top={370} />
        <g fontFamily="Liberation Sans, sans-serif" fontSize="11">
          <path d="M236 615h4v21h-4z" fill="#17761f" />
          <path d="M233 621l5-11 5 11-5 2z" fill="#2c9a35" stroke="#0f4f15" />
          <path d="M239 634l20 5-1 4-20-6z" fill="#cf2a2a" />
          <path d="M256 637l10 6-11 1z" fill="#e86060" stroke="#b31c1c" />
          <path d="M236 635l4 3-10 9-4-3z" fill="#14148c" />
          <path d="M224 645l4-4 5 3-2 5-7 2z" fill="#1717b8" />
          <text x="234" y="608" fill="#2d8a37">Y</text>
          <text x="263" y="648" fill="#d33434">X</text>
          <text x="218" y="656" fill="#2222c0">Z</text>
        </g>
      </svg>
      <p className="absolute bottom-0 left-3 text-[12px] leading-[18px] font-bold text-[#111]">*Trimétrica</p>
      <nav className="absolute top-[39px] right-0 flex w-5 flex-col border-t-2 border-l-2 border-[#1a1b1d]">
        {[
          ["Foro", <Forum />, "bg-[#a8aab0]"],
          ["Recursos", <Home />, "bg-[#eef0f3]"],
          ["Biblioteca", <Library />, "bg-[#a8aab0]"],
          ["Explorador", <FolderOpen />, "bg-[#a8aab0]"],
          ["Paleta de vistas", <Feature />, "bg-[#a8aab0]"],
          ["Apariencias y escenas", <Ball />, "bg-[#a8aab0]"],
          ["Propiedades personalizadas", <Props />, "bg-[#a8aab0]"],
        ].map(([label, icon, bg]) => (
          <button key={label as string} type="button" aria-label={label as string} className={`flex h-6 items-center overflow-hidden border-b-2 border-[#1a1b1d] pl-[2px] ${bg as string}`}>
            {icon}
          </button>
        ))}
      </nav>
    </section>
  );
}

function BottomTabs() {
  return (
    <div className="flex h-[17px] shrink-0 items-stretch border-t border-b-2 border-[#151617] bg-[#e2e6ea] leading-[14px]">
      <div className="flex bg-[#b8babc] pl-[2px]">
        {["M5 0v6L1 3zM0 0h1v6H0z", "M5 0v6L1 3z", "M1 0v6l4-3z", "M1 0v6l4-3zM5 0h1v6H5z"].map((d, i) => (
          <button key={d} type="button" aria-label={`Ir a pestaña ${i + 1}`} className="flex w-4 items-center justify-center border border-[#94979a]">
            <svg width="6" height="6" viewBox="0 0 6 6" aria-hidden="true"><path d={d} fill="#888b8e" /></svg>
          </button>
        ))}
        <span className="w-[2px]" />
      </div>
      <button type="button" className="w-16 border-x-2 border-[#151617] bg-[#e8ebee] font-bold">Modelo</button>
      <button type="button" className="w-[157px] border-r-2 border-[#151617] bg-[#a9abad] pr-2">Estudio de movimiento 1</button>
    </div>
  );
}

function StatusBar() {
  return (
    <footer className="flex h-[14px] shrink-0 items-start bg-[#d9dde1] pl-[2px] leading-[18px]">
      <span>SolidWorks Premium 2014 x64 Edition</span>
      <span className="ml-auto">MMGS</span>
      <svg width="6" height="4" viewBox="0 0 6 4" aria-hidden="true" className="mt-[8px] ml-10">
        <path d="M0 4h6L3 0z" fill="#333" />
      </svg>
      <svg width="14" height="14" viewBox="0 0 14 14" aria-hidden="true" className="mt-[2px] ml-4">
        <path d="M.5.5h13v13H.5z" fill="#e3f5ec" stroke="#2b6a8c" />
        <text x="7" y="12" textAnchor="middle" fontFamily="Liberation Sans, sans-serif" fontWeight="700" fontSize="13" fill="#159043">?</text>
      </svg>
      <svg width="18" height="16" viewBox="0 0 18 16" aria-hidden="true" className="mt-[2px] mr-[2px] ml-12">
        <path d="M1 10l8-8c3-2 7 1 6 5l-7 8-4-1z" fill="#f2c230" stroke="#7d5a0c" />
        <circle cx="12" cy="5" r="1.500" fill="#fff" stroke="#7d5a0c" />
        <path d="M5 9l5 3M7 7l5 3" stroke="#7d5a0c" />
      </svg>
    </footer>
  );
}

export default function App() {
  return (
    <div className="relative flex h-screen flex-col overflow-hidden bg-[#c5c7d3] font-['Noto_Sans','Noto_Sans_CJK_SC',sans-serif] text-[11px] leading-[15px] text-[#16181a]">
      <TitleBar />
      <StandardBar />
      <Ribbon />
      <CommandTabs />
      <main className="flex min-h-0 flex-1">
        <FeaturePanel />
        <Viewport />
      </main>
      <BottomTabs />
      <StatusBar />
      <div className="pointer-events-none absolute inset-0 flex items-center justify-center whitespace-nowrap text-white/80 [text-shadow:1px_1px_1px_rgba(40,30,20,0.75)]">
        <span className="font-['Liberation_Serif','Noto_Sans_CJK_SC',serif] text-[54px] leading-none font-light">莫西网www.3dmox.com</span>
      </div>
    </div>
  );
}
